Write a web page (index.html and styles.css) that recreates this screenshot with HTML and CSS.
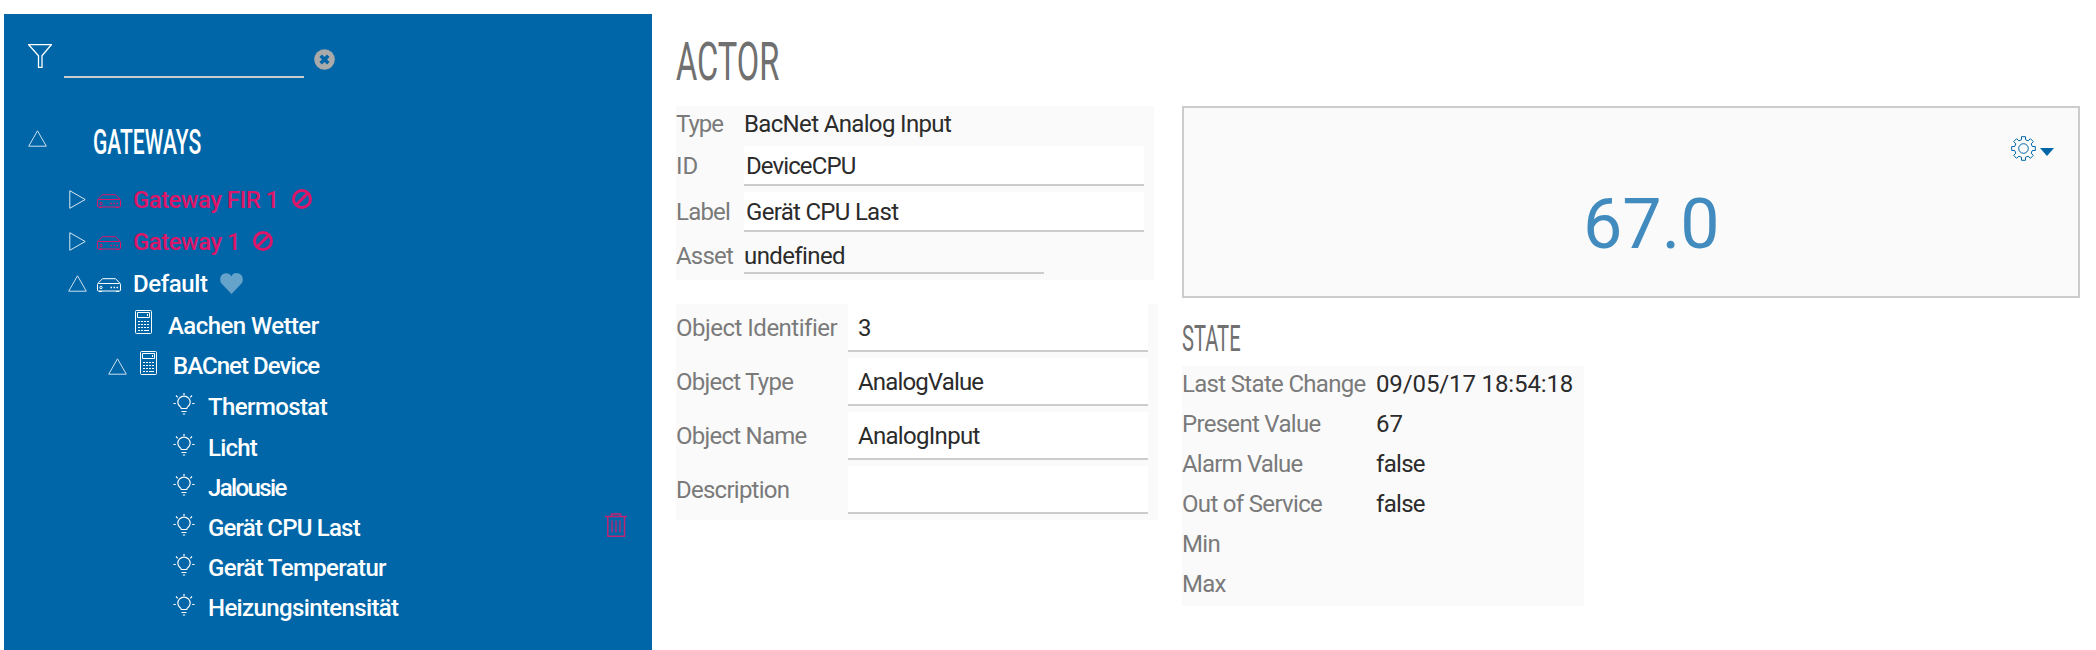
FILE: index.html
```html
<!DOCTYPE html>
<html lang="de">
<head>
<meta charset="utf-8">
<title>Gateways</title>
<link rel="stylesheet" href="styles.css">
</head>
<body>
<svg width="0" height="0" class="defs">
  <defs>
    <symbol id="router" viewBox="0 0 24 15"><path d="M.8 5.5 5.5 .7h13l4.7 4.8M1.5 5.5h21a1 1 0 0 1 1 1v5.500a1 1 0 0 1-1 1h-21a1 1 0 0 1-1-1V6.500a1 1 0 0 1 1-1zM2 13.500h3M19 13.500h3"/><circle cx="4" cy="9.500" r="1.200"/><path d="M13.500 9.500h1.500M16.500 9.500h1.500M19.500 9.500h1.500" stroke-width="1.500"/></symbol>
    <symbol id="calc" viewBox="0 0 17 24"><rect x=".5" y=".5" width="16" height="23" rx="1"/><path d="M2.500 2.500h12v5h-12zM12.500 4v2"/><path d="M3 11.500h11M3 14.500h11M3 17.500h11" stroke-dasharray="2 1"/><path d="M3 20.500h2M6 20.500h2M9 20.500h5"/></symbol>
    <symbol id="bulb" viewBox="0 0 22 22"><path d="M8.300 15.500c0-1.500-3.500-2.700-3.500-6.200a6.200 6.200 0 0 1 12.400 0c0 3.500-3.500 4.700-3.500 6.200zM8.500 18.500h5M9.800 21h2.400M11 0v2M.5 10.500h2.300M19.200 10.500h2.300M3 2.500l1.700 1.800M19 2.500l-1.700 1.800"/></symbol>
    <symbol id="up" viewBox="0 0 19 17"><path d="M.7 16.200 9.500.8l8.800 15.400z"/></symbol>
    <symbol id="right" viewBox="0 0 17 19"><path d="M.8.7v17.600L16.200 9.500z"/></symbol>
    <symbol id="ban" viewBox="0 0 20 20"><circle cx="10" cy="10" r="8.500"/><path d="m4.200 15.800 11.600-11.600"/></symbol>
  </defs>
</svg>
<div class="app">
  <nav class="sidebar">
    <div class="filter">
      <svg class="funnel" viewBox="0 0 24 24"><path d="M.5.5h23L14 11.800V23.500h-3.500V11.800z"/></svg>
      <div class="filter-field"></div>
      <svg class="clear" viewBox="0 0 21 21"><circle cx="10.500" cy="10.500" r="10.300"/><path d="m6.700 6.700 7.600 7.600M14.300 6.700l-7.600 7.600"/></svg>
    </div>
    <div class="root"><svg class="up"><use href="#up"/></svg><h2 class="narrow gateways">GATEWAYS</h2></div>
    <div class="row l1 offline"><svg class="right"><use href="#right"/></svg><svg class="router"><use href="#router"/></svg><span class="t-fir">Gateway FIR 1</span><svg class="ban"><use href="#ban"/></svg></div>
    <div class="row l1 offline"><svg class="right"><use href="#right"/></svg><svg class="router"><use href="#router"/></svg><span class="t-gw">Gateway 1</span><svg class="ban"><use href="#ban"/></svg></div>
    <div class="row l1"><svg class="up"><use href="#up"/></svg><svg class="router"><use href="#router"/></svg><span class="t-def">Default</span><svg class="heart" viewBox="0 0 23 21"><path d="M11.500 21 1.800 10.800C-1 7.500 0 2.500 3.500.8 6.500-.5 10 .5 11.500 3.500 13-.5 16.500-.5 19.500.8 23 2.500 24 7.500 21.200 10.800z"/></svg></div>
    <div class="row l2"><svg class="calc"><use href="#calc"/></svg><span class="t-aa">Aachen Wetter</span></div>
    <div class="row l2 open"><svg class="up"><use href="#up"/></svg><svg class="calc"><use href="#calc"/></svg><span class="t-bac">BACnet Device</span></div>
    <div class="row l3 first"><svg class="bulb"><use href="#bulb"/></svg><span class="t-th">Thermostat</span></div>
    <div class="row l3"><svg class="bulb"><use href="#bulb"/></svg><span class="t-li">Licht</span></div>
    <div class="row l3"><svg class="bulb"><use href="#bulb"/></svg><span class="t-ja">Jalousie</span></div>
    <div class="row l3"><svg class="bulb"><use href="#bulb"/></svg><span class="t-cpu">Gerät CPU Last</span><svg class="trash" viewBox="0 0 22 24"><path d="M0 3.500h22M6.500 3.500V1h9v2.500M2.800 3.500v19.700h16.700V3.500"/><path d="M7 7.500v12M11 7.500v12M15 7.500v12" stroke-width="2" opacity=".65"/></svg></div>
    <div class="row l3"><svg class="bulb"><use href="#bulb"/></svg><span class="t-te">Gerät Temperatur</span></div>
    <div class="row l3"><svg class="bulb"><use href="#bulb"/></svg><span class="t-he">Heizungsintensität</span></div>
  </nav>
  <main class="main">
    <h1 class="narrow actor">ACTOR</h1>
    <div class="columns">
      <section class="left">
        <div class="panel basic">
          <div class="field type"><label class="w-type">Type</label><span class="w-bac">BacNet Analog Input</span></div>
          <div class="field"><label>ID</label><span class="input w-dev">DeviceCPU</span></div>
          <div class="field"><label class="w-label">Label</label><span class="input w-cpu">Gerät CPU Last</span></div>
          <div class="field asset"><label class="w-asset">Asset</label><span class="line w-und">undefined</span></div>
        </div>
        <div class="panel object">
          <div class="field"><label class="w-oi">Object Identifier</label><span class="input">3</span></div>
          <div class="field"><label class="w-ot">Object Type</label><span class="input w-av">AnalogValue</span></div>
          <div class="field"><label class="w-on">Object Name</label><span class="input w-ai">AnalogInput</span></div>
          <div class="field"><label class="w-de">Description</label><span class="input"></span></div>
        </div>
      </section>
      <section class="rightcol">
        <div class="widget">
          <div class="tools"><svg class="gear" viewBox="-12.500 -12.500 25 25"><path d="M-2-11.800h4v3l2.600 1.100L6.900-9.800 9.800-6.900 7.700-4.600 8.800-2h3v4h-3L7.700 4.600 9.800 6.900 6.900 9.800 4.600 7.700 2 8.800v3h-4v-3l-2.600-1.100-2.300 2.100-2.900-2.900 2.100-2.300L-8.800 2h-3v-4h3l1.100-2.600-2.100-2.300 2.900-2.900 2.300 2.100L-2-8.800z"/><circle r="4.800"/></svg><svg class="caret" viewBox="0 0 14 8"><path d="M0 0h14L7 8z"/></svg></div>
          <div class="value">67.0</div>
        </div>
        <h2 class="narrow state">STATE</h2>
        <div class="panel status">
          <div class="field"><label class="w-lsc">Last State Change</label><span class="w-date">09/05/17 18:54:18</span></div>
          <div class="field"><label class="w-pv">Present Value</label><span>67</span></div>
          <div class="field"><label class="w-alv">Alarm Value</label><span class="w-false">false</span></div>
          <div class="field"><label class="w-oos">Out of Service</label><span class="w-false">false</span></div>
          <div class="field"><label class="w-min">Min</label><span></span></div>
          <div class="field"><label class="w-min">Max</label><span></span></div>
        </div>
      </section>
    </div>
  </main>
</div>
</body>
</html>
```
FILE: styles.css
```css
* { box-sizing: border-box; }
body { margin: 0; background: #fff; font: 24px/28px Roboto, "Open Sans", sans-serif; color: #2b2b2b; overflow: hidden; }
h1, h2 { margin: 0; font-weight: 400; }
svg { flex: none; fill: none; stroke: currentColor; stroke-width: 1; }
.defs { position: absolute; }
.app { display: flex; height: 650px; padding: 14px 0 0 4px; }
.narrow { transform-origin: 0 50%; white-space: nowrap; }

/* Sidebar */
.sidebar { width: 648px; height: 636px; background: #0066a8; color: #fff; }
.filter { display: flex; height: 64px; padding: 30px 0 0 24px; }
.funnel { width: 24px; height: 24px; stroke-width: 1.3; }
.filter-field { width: 240px; height: 34px; margin: 0 10px 0 12px; border-bottom: 2px solid #ccc; }
.clear { width: 21px; height: 21px; margin-top: 5px; }
.clear circle { fill: #aaa; stroke: none; }
.clear path { stroke: #0066a8; stroke-width: 3.6; }
.root { display: flex; align-items: center; height: 100px; padding: 29px 0 0 24px; }
.gateways { margin-left: 46px; font-size: 35px; font-weight: 500; line-height: 42px; transform: scaleX(.602); }
.up { width: 19px; height: 17px; opacity: .8; }
.right { width: 17px; height: 19px; margin: 0 1px; opacity: .85; }
.root .up { margin-bottom: 8px; }
.row { display: flex; align-items: center; height: 42px; font-weight: 500; white-space: nowrap; }
.l1 span, .l2 span { padding-top: 1px; }
.row.open span { padding-top: 0; }
.offline span, .offline .router, .offline .ban { color: #dc1668; }
.l1 { padding-left: 64px; }
.router { width: 24px; height: 15px; margin: 4px 12px 0 10px; }
.ban { width: 20px; height: 20px; margin: 0 0 0 13px; stroke-width: 3; }
.heart { width: 23px; height: 21px; margin-left: 12px; }
.heart path { fill: #66a3cb; stroke: none; }
.l2 { padding-left: 131px; }
.calc { width: 17px; height: 24px; margin: 0 16px 6px 0; }
.open { height: 40px; padding-left: 104px; }
.open .calc { margin-left: 13px; }
.l3 { height: 40px; padding-left: 169px; }
.first { height: 42px; }
.bulb { width: 22px; height: 22px; margin: 0 13px 6px 0; stroke-width: 1.2; }
.trash { width: 22px; height: 24px; margin: 0 25px 6px auto; color: #c02472; stroke-width: 1.5; }

/* Detail area */
.main { padding: 0 0 0 24px; }
.actor { height: 92px; padding-top: 18px; font-size: 53px; line-height: 60px; color: #707070; transform: scaleX(.615); }
.columns { display: flex; gap: 24px; }
.left { width: 482px; }
.panel { background: #fafafa; }
.field { display: flex; white-space: nowrap; }
label { color: #7a7a7a; }
.basic { width: 478px; height: 174px; }
.basic label { width: 68px; }
.basic .field { height: 46px; line-height: 40px; }
.basic .type { height: 40px; line-height: 36px; }
.input { background: #fff; border-bottom: 2px solid #ccc; }
.basic .input { width: 400px; height: 40px; padding-left: 2px; }
.basic .asset { height: 42px; line-height: 37px; }
.line { width: 300px; height: 36px; border-bottom: 2px solid #ccc; }
.object { height: 216px; margin-top: 24px; }
.object .field { height: 54px; line-height: 48px; }
.object label { width: 172px; }
.object .input { width: 300px; height: 48px; padding-left: 10px; }

.widget { width: 898px; height: 192px; border: 2px solid #ccc; background: #fafafa; }
.tools { display: flex; justify-content: flex-end; padding: 28px 24px 0 0; color: #0066a8; }
.gear { width: 25px; height: 25px; }
.caret { width: 14px; height: 8px; margin: 12px 0 0 4px; }
.caret path { fill: currentColor; stroke: none; }
.value { margin-left: 399px; margin-top: 23px; font-size: 70px; line-height: 80px; color: #428bbf; }
.state { width: 402px; height: 68px; padding-top: 20px; font-size: 36px; line-height: 42px; color: #707070; transform: scaleX(.56); }
.status { width: 402px; height: 240px; }
.status .field { height: 40px; line-height: 36px; }
.status label { width: 194px; }

/* Tracking of the individual labels */
.t-fir { letter-spacing: -.58px; }
.t-gw { letter-spacing: -.55px; }
.t-def { letter-spacing: -.4px; }
.t-aa { letter-spacing: -.56px; }
.t-bac { letter-spacing: -.95px; }
.t-th { letter-spacing: -.6px; }
.t-li { letter-spacing: -.8px; }
.t-ja { letter-spacing: -1.6px; }
.t-cpu { letter-spacing: -.8px; }
.t-te, .t-he { letter-spacing: -.63px; }
.w-type { letter-spacing: -1px; }
.w-bac { letter-spacing: -.65px; }
.w-dev { letter-spacing: -.9px; }
.w-label { letter-spacing: -.8px; }
.w-cpu { letter-spacing: -.7px; }
.w-asset { letter-spacing: -.8px; }
.w-und { letter-spacing: -.6px; }
.w-oi { letter-spacing: -.5px; }
.w-ot, .w-de { letter-spacing: -.75px; }
.w-on { letter-spacing: -.75px; }
.w-av { letter-spacing: -.85px; }
.w-ai { letter-spacing: -.7px; }
.w-lsc, .w-oos { letter-spacing: -.68px; }
.w-pv { letter-spacing: -.7px; }
.w-alv { letter-spacing: -.8px; }
.w-min, .w-false { letter-spacing: -.7px; }
.w-date { letter-spacing: -.12px; }
```
